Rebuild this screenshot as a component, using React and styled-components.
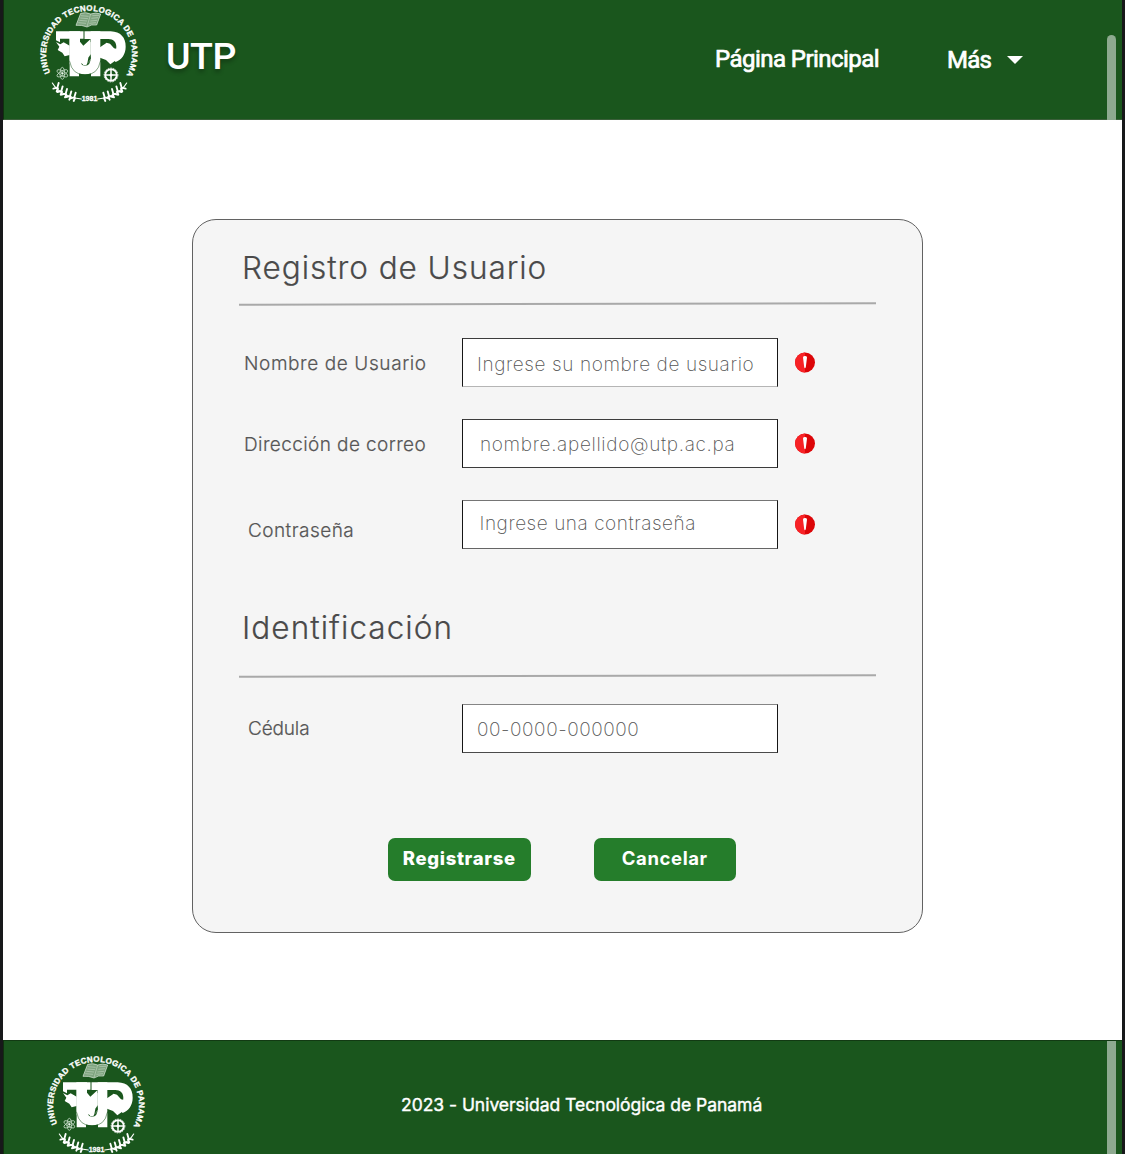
import React from "react";
import styled, { createGlobalStyle } from "styled-components";

const GlobalStyle = createGlobalStyle`
  *, *::before, *::after { box-sizing: border-box; }
  body { margin: 0; background: #17181a; }
`;

const uiFont = `Inter, "Open Sans", sans-serif`;

const Window = styled.div`
  display: flex;
  flex-direction: column;
  width: 1125px;
  height: 1154px;
  padding: 0 3px;
  overflow: hidden;
  background: #17181a;
  font-family: ${uiFont};
`;

const Header = styled.header`
  display: flex;
  flex: none;
  height: 120px;
  padding-left: 27px;
  background: #1a561d;
  border-left: 1px solid #10300f;
  border-bottom: 1px solid #3b5f3a;
`;

const Seal = styled.svg`
  flex: none;
  width: 115px;
  height: 110px;
  margin: -1px 0 0 -1px;
`;

const Brand = styled.div`
  width: 548px;
  padding: 34px 0 0 21px;
  color: #fff;
  font: 500 37.5px/44px Roboto, sans-serif;
  letter-spacing: -0.5px;
  text-shadow: 0 3px 4px rgba(0, 0, 0, 0.3);
`;

const Nav = styled.nav`
  display: flex;
  flex: 1;
  gap: 68px;
  padding: 45px 0 0 22px;
`;

const NavLink = styled.a`
  display: flex;
  align-items: center;
  height: 28px;
  margin-top: ${(p) => p.$drop || 0}px;
  gap: 16px;
  color: #fff;
  font: 400 24px/28px Roboto, sans-serif;
  letter-spacing: ${(p) => p.$spacing}px;
  white-space: nowrap;
  -webkit-text-stroke: 0.7px #fff;
`;

const Caret = styled.span`
  border: 8px solid transparent;
  border-top-color: #fff;
  border-bottom: 0;
`;

const ScrollThumb = styled.div`
  flex: none;
  width: 9px;
  height: ${(p) => p.$height}px;
  margin: ${(p) => p.$top}px 6px 0 0;
  border-radius: ${(p) => (p.$top ? "5px 5px 0 0" : 0)};
  background: #8eaa90;
`;

const Main = styled.main`
  flex: none;
  height: 920px;
  padding: 99px 0 0 189px;
  background: #fff;
`;

const Card = styled.form`
  display: flex;
  flex-direction: column;
  width: 731px;
  height: 714px;
  padding: 0 45px;
  border: 1px solid #626262;
  border-radius: 24px;
  background: #f5f5f5;
`;

const SectionTitle = styled.h2`
  flex: none;
  height: 40px;
  margin: ${(p) => p.$top}px 0 0 4px;
  color: #4a4a4a;
  font: 300 31.5px/40px ${uiFont};
  letter-spacing: ${(p) => p.$spacing}px;
  -webkit-text-stroke: 0.2px #4a4a4a;
`;

const Divider = styled.hr`
  flex: none;
  width: 637px;
  height: 1.5px;
  margin: ${(p) => p.$top}px 0 0.5px 1px;
  border: 0;
  background: #a9a9a9;
  transform: rotate(-0.12deg);
`;

const Row = styled.div`
  display: grid;
  grid-template-columns: 224px 316px 20px;
  align-items: center;
  flex: none;
  height: 49px;
  margin-top: ${(p) => p.$top}px;
`;

const Label = styled.label`
  padding: ${(p) => p.$drop || 0}px 0 0 ${(p) => p.$indent}px;
  color: #565656;
  font: 300 19px/24px ${uiFont};
  letter-spacing: ${(p) => p.$spacing}px;
  white-space: nowrap;
  -webkit-text-stroke: 0.2px #565656;
`;

const Field = styled.input`
  width: 316px;
  height: 49px;
  padding: ${(p) => p.$drop || 0}px 0 ${(p) => p.$lift || 0}px ${(p) => p.$indent}px;
  border: 1px solid #161616;
  border-top-color: ${(p) => p.$topLine};
  border-bottom-color: ${(p) => p.$bottomLine};
  border-radius: 0;
  outline: 0;
  background: #fff;
  font: 250 19px/24px ${uiFont};
  letter-spacing: ${(p) => p.$spacing}px;
  &::placeholder { color: #555; opacity: 1; }
`;

const AlertIcon = styled.svg`
  width: 20px;
  height: 21px;
  margin: -1px 0 0 17px;
`;

const Actions = styled.div`
  display: flex;
  gap: 63px;
  margin: 85px 0 0 150px;
`;

const Button = styled.button`
  width: 142.5px;
  height: 43px;
  padding: 0 0 2px;
  border: 0;
  border-radius: 7px;
  color: #fff;
  background: #257d2b;
  font: ${(p) => p.$weight} 18.5px/41px ${uiFont};
  letter-spacing: ${(p) => p.$spacing}px;
`;

const Footer = styled.footer`
  display: flex;
  flex: none;
  height: 114px;
  padding-left: 34px;
  overflow: hidden;
  background: #1a561d;
  border-top: 1px solid #123a13;
  border-left: 1px solid #10300f;
`;

const FooterSeal = styled(Seal)`
  margin-top: 9px;
`;

const Copyright = styled.p`
  flex: 1;
  margin: 52px 0 0 249px;
  color: #fff;
  font: 400 17.5px/24px ${uiFont};
  letter-spacing: -0.03px;
  white-space: nowrap;
  -webkit-text-stroke: 0.4px #fff;
`;

const leaves = [
  [82, 266],
  [94, 276],
  [107, 284],
  [120, 291],
  [133, 295],
];

function Laurel() {
  return (
    <g stroke="#fff" fill="none" strokeLinecap="round">
      <path d="M67 252Q92 293 154 300" strokeWidth="3.5" />
      {leaves.map(([x, y]) => (
        <path key={x} d={`M${x} ${y}l4 -14M${x} ${y}l-12 3M${x + 2} ${y + 2}l-4 9`} strokeWidth="5.6" />
      ))}
    </g>
  );
}

function SealArt({ id }) {
  return (
    <>
      <defs>
        <path id={id} d="M61 221A129 129 0 1 1 293 221" />
      </defs>
      <text
        fill="#fff"
        stroke="#fff"
        strokeWidth="1"
        fontFamily="Liberation Sans, sans-serif"
        fontWeight="700"
        fontSize="24"
      >
        <textPath href={`#${id}`} textLength="530" lengthAdjust="spacing">
          UNIVERSIDAD TECNOLOGICA DE PANAMA
        </textPath>
      </text>
      <path d="M152 43Q167 38 182 45Q198 39 212 45L200 78Q184 75 171 84Q155 77 138 79Z" fill="#7fa480" stroke="#e2ede2" strokeWidth="2" />
      <path d="M182 45L171 83M153 50l23 2M151 57l23 2M148 64l23 2M145 71l23 2M187 50l20-1M184 58l20-2M181 66l20-2M178 73l20-2" fill="none" stroke="#c9dcc9" strokeWidth="1.6" />
      <path
        d="M78 129L91 136L101 130L119 140V168L104 172L97 161L83 153L88 143Z
           M150 128L160 140L181 121V166L174 173L179 186L168 198L150 192Z
           M210 145L230 131L240 134L252 148L284 155L266 178L241 196L228 183L210 176Z"
        fill="#fff"
      />
      <path d="M119 190H131L147 222V232H119ZM211 190H199L183 222V232H211Z" fill="#fff" />
      <path d="M78 97H161V119H90V130L78 124Z" fill="#fff" />
      <path
        d="M163 97H242C272 98 287 116 287 143C287 166 275 182 257 189L243 173C254 167 259 157 259 144C259 129 251 120 235 120H163Z"
        fill="#fff"
      />
      <path
        d="M118 97H150V177Q150 200 165 200Q182 200 182 177V97H211V180Q211 226 165 226Q118 226 118 180Z"
        fill="#fff"
      />
      <path d="M162 96V120M119 187Q126 227 165 228Q204 227 211 187" fill="none" stroke="#1a561d" strokeWidth="1.6" />
      <path d="M150 140L160 146L182 128V170L168 199H160L149 178Z" fill="#fff" />
      <path d="M171 198L182 178V166L175 176Z" fill="#1a561d" />
      <g fill="none" stroke="#c8dcc9" strokeWidth="2.4">
        <ellipse cx="97" cy="223" rx="18" ry="7" transform="rotate(30 97 223)" />
        <ellipse cx="97" cy="223" rx="18" ry="7" transform="rotate(90 97 223)" />
        <ellipse cx="97" cy="223" rx="18" ry="7" transform="rotate(150 97 223)" />
        <circle cx="97" cy="223" r="3" fill="#fff" />
      </g>
      <g fill="none" stroke="#fff">
        <circle cx="243" cy="228" r="17.5" strokeWidth="6" />
        <circle cx="243" cy="228" r="21" strokeWidth="2" strokeDasharray="5 3" />
        <path d="M243 211V245M226 228H260" strokeWidth="4.5" />
      </g>
      <circle cx="243" cy="228" r="4.5" fill="#fff" />
      <Laurel />
      <g transform="translate(357 0) scale(-1 1)">
        <Laurel />
      </g>
      <text
        x="178.5"
        y="307"
        textAnchor="middle"
        fill="#fff"
        stroke="#fff"
        strokeWidth="0.8"
        fontFamily="Liberation Sans, sans-serif"
        fontWeight="700"
        fontSize="21"
      >
        1981
      </text>
    </>
  );
}

function Required() {
  return (
    <AlertIcon viewBox="0 0 20 21" aria-hidden="true">
      <circle cx="10" cy="10.5" r="10" fill="#dc0508" />
      <path d="M10 .5A10 10 0 0 0 10 20.5Z" fill="#f72226" />
      <path d="M8 5.2Q8.2 4 10 4T12 5.2L10.8 15Q10 17.6 9.2 15Z" fill="#fff" />
    </AlertIcon>
  );
}

export default function App() {
  return (
    <>
      <GlobalStyle />
      <Window>
        <Header>
          <Seal viewBox="0 0 345 330">
            <SealArt id="headerSealArc" />
          </Seal>
          <Brand>UTP</Brand>
          <Nav>
            <NavLink $spacing={-0.55}>Página Principal</NavLink>
            <NavLink $spacing={-0.7} $drop={1}>
              Más <Caret />
            </NavLink>
          </Nav>
          <ScrollThumb $top={35} $height={85} />
        </Header>
        <Main>
          <Card>
            <SectionTitle $top={28} $spacing={0.95}>Registro de Usuario</SectionTitle>
            <Divider $top={15} />
            <Row $top={33}>
              <Label $indent={6} $spacing={0.6} $drop={2} htmlFor="user">Nombre de Usuario</Label>
              <Field id="user" placeholder="Ingrese su nombre de usuario" $indent={14} $drop={3} $spacing={0.6} $topLine="#3c3c3c" $bottomLine="#b5b5b5" />
              <Required />
            </Row>
            <Row $top={32}>
              <Label $indent={6} $spacing={0.4} $drop={2} htmlFor="mail">Dirección de correo</Label>
              <Field id="mail" placeholder="nombre.apellido@utp.ac.pa" $indent={17} $drop={2} $spacing={0.67} $topLine="#3c3c3c" $bottomLine="#3c3c3c" />
              <Required />
            </Row>
            <Row $top={32}>
              <Label $indent={10} $spacing={0.45} $drop={12} htmlFor="pass">Contraseña</Label>
              <Field id="pass" placeholder="Ingrese una contraseña" $indent={16.5} $lift={2} $spacing={0.55} $topLine="#757575" $bottomLine="#656565" />
              <Required />
            </Row>
            <SectionTitle $top={59} $spacing={1.05}>Identificación</SectionTitle>
            <Divider $top={27} />
            <Row $top={27}>
              <Label $indent={10} $spacing={-0.15} htmlFor="idcard">Cédula</Label>
              <Field id="idcard" placeholder="00-0000-000000" $indent={14} $drop={1} $spacing={0.55} $topLine="#858585" $bottomLine="#4a4a4a" />
            </Row>
            <Actions>
              <Button type="button" $weight={800} $spacing={0.65}>Registrarse</Button>
              <Button type="button" $weight={700} $spacing={0.6}>Cancelar</Button>
            </Actions>
          </Card>
        </Main>
        <Footer>
          <FooterSeal viewBox="0 0 345 330">
            <SealArt id="footerSealArc" />
          </FooterSeal>
          <Copyright>2023 - Universidad Tecnológica de Panamá</Copyright>
          <ScrollThumb $top={0} $height={114} />
        </Footer>
      </Window>
    </>
  );
}
